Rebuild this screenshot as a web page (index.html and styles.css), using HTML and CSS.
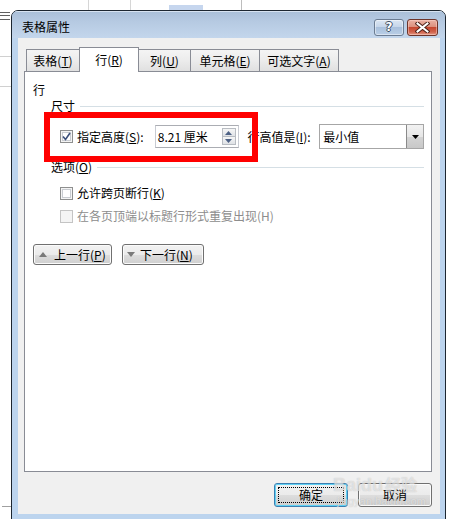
FILE: index.html
```html
<!DOCTYPE html>
<html lang="zh-CN">
<head>
<meta charset="utf-8">
<title>表格属性</title>
<link rel="stylesheet" href="styles.css">
</head>
<body>
<div class="doc-line doc-menu1"></div>
<div class="doc-line doc-menu2"></div>
<div class="doc-line doc-menu3"></div>
<div class="doc-rule doc-r1"></div>
<div class="doc-rule doc-r2"></div>
<div class="doc-rule doc-r3"></div>
<div class="doc-vline doc-v1"></div>
<div class="doc-vline doc-v2"></div>
<div class="doc-vline doc-v3"></div>
<div class="doc-sel"></div>

<div class="window">
  <div class="titlebar">
    <span class="title">表格属性</span>
    <div class="caption-btns">
      <span class="cap help">?</span>
      <span class="cap close">
        <svg width="15" height="11" viewBox="0 0 15 11">
          <path d="M2.5 1.5 L12.5 9.5 M12.5 1.5 L2.5 9.5" stroke="#4a2018" stroke-width="4" stroke-linecap="square"/>
          <path d="M2.5 1.5 L12.5 9.5 M12.5 1.5 L2.5 9.5" stroke="#ffffff" stroke-width="2" stroke-linecap="square"/>
        </svg>
      </span>
    </div>
  </div>
  <div class="client">
    <div class="tabs">
      <div class="tab t1">表格(<u>T</u>)</div>
      <div class="tab t2 active">行(<u>R</u>)</div>
      <div class="tab t3">列(<u>U</u>)</div>
      <div class="tab t4">单元格(<u>E</u>)</div>
      <div class="tab t5">可选文字(<u>A</u>)</div>
    </div>
    <div class="panel">
      <div class="sec-title">行</div>
      <div class="group-head"><span>尺寸</span><span class="rule"></span></div>
      <div class="height-row">
        <span class="cb checked">
          <svg width="9" height="9" viewBox="0 0 9 9"><path d="M1 4.5 L3.5 7.5 L8 1" stroke="#3b4f7a" stroke-width="1.6" fill="none"/></svg>
        </span>
        <span class="lbl lbl-h">指定高度(<u>S</u>):</span>
        <span class="spin">
          <span class="spin-val">8.21 厘米</span>
          <span class="spin-btns">
            <span class="sb up"><svg width="7" height="4" viewBox="0 0 7 4"><path d="M0 4 L3.5 0 L7 4 Z" fill="#4d6185"/></svg></span>
            <span class="sb down"><svg width="7" height="4" viewBox="0 0 7 4"><path d="M0 0 L3.5 4 L7 0 Z" fill="#4d6185"/></svg></span>
          </span>
        </span>
        <span class="lbl lbl-r">行高值是(<u>I</u>):</span>
        <span class="select">
          <span class="sel-val">最小值</span>
          <span class="sel-btn"><svg width="7" height="4" viewBox="0 0 7 4"><path d="M0 0 L3.5 4 L7 0 Z" fill="#000"/></svg></span>
        </span>
      </div>
      <div class="group-head opt"><span>选项(<u>O</u>)</span><span class="rule"></span></div>
      <div class="cb-row r1"><span class="cb"></span><span class="lbl">允许跨页断行(<u>K</u>)</span></div>
      <div class="cb-row r2 disabled"><span class="cb"></span><span class="lbl">在各页顶端以标题行形式重复出现(H)</span></div>
      <div class="nav-row">
        <span class="btn nav prev"><svg width="8" height="5" viewBox="0 0 8 5"><path d="M0 5 L4 0 L8 5 Z" fill="#7a7a7a"/></svg><span>上一行(<u>P</u>)</span></span>
        <span class="btn nav next"><svg width="8" height="5" viewBox="0 0 8 5"><path d="M0 0 L4 5 L8 0 Z" fill="#7a7a7a"/></svg><span>下一行(<u>N</u>)</span></span>
      </div>
    </div>
    <div class="footer">
      <span class="btn ok"><span class="focus">确定</span></span>
      <span class="btn cancel">取消</span>
    </div>
  </div>
</div>

<div class="annot"></div>
<div class="watermark">
  <div class="wm-big">Baidu<span class="wm-cn">经验</span></div>
  <div class="wm-small">jingyan.baidu.com</div>
</div>
</body>
</html>
```
FILE: styles.css
```css
html, body {
  margin: 0;
  padding: 0;
}
body {
  width: 449px;
  height: 519px;
  overflow: hidden;
  position: relative;
  background: #ffffff;
  font-family: "Noto Sans CJK SC", "Microsoft YaHei", sans-serif;
  font-size: 12px;
  color: #000;
}
u { text-decoration: underline; text-underline-offset: 1px; }

/* background document fragments */
.doc-line { position: absolute; left: 0; width: 10px; height: 1px; background: #606060; }
.doc-menu1 { top: 12px; }
.doc-menu2 { top: 15px; }
.doc-menu3 { top: 19px; }
.doc-rule { position: absolute; left: 0; width: 11px; height: 1px; background: #d0d0d0; }
.doc-r1 { top: 56px; }
.doc-r2 { top: 86px; }
.doc-r3 { top: 506px; left: 2px; width: 9px; background: #a0a0a0; }
.doc-vline { position: absolute; top: 0; width: 1px; height: 10px; background: #d6d6d6; }
.doc-v1 { left: 88px; }
.doc-v2 { left: 130px; }
.doc-v3 { left: 241px; background: #bdbdbd; }
.doc-sel { position: absolute; left: 169px; top: 5px; width: 34px; height: 5px; background: #c6d6ee; }

/* window */
.window {
  position: absolute;
  left: 11px;
  top: 10px;
  width: 435px;
  height: 515px;
  box-sizing: border-box;
  border: 1px solid #1c2630;
  border-radius: 7px 7px 0 0;
  background: #bcd4ee;
  display: flex;
  flex-direction: column;
  overflow: hidden;
}
.titlebar {
  height: 27px;
  flex: none;
  display: flex;
  align-items: flex-start;
  justify-content: space-between;
  padding: 0 7px 0 10px;
  background: linear-gradient(to bottom, #a9bfd8 0%, #b6cae2 40%, #c3d6ec 100%);
  box-shadow: inset 0 1px 0 #d7e3f1;
}
.title {
  margin-top: 8px;
  line-height: 16px;
  font-size: 12px;
  color: #000;
}
.caption-btns {
  display: flex;
  gap: 3px;
  margin-top: 8px;
}
.cap {
  height: 17px;
  box-sizing: border-box;
  border-radius: 3px;
  display: flex;
  align-items: center;
  justify-content: center;
}
.help {
  width: 30px;
  border: 1px solid #6b7c92;
  background: linear-gradient(to bottom, #dbe6f3 0%, #c6d6ea 45%, #a9c0dc 50%, #b9cee6 100%);
  box-shadow: inset 0 0 0 1px rgba(255,255,255,0.45);
  color: #fff;
  font-family: "DejaVu Sans", sans-serif;
  font-weight: bold;
  font-size: 12px;
  line-height: 15px;
  text-shadow: 1px 0 0 #3f4d60, -1px 0 0 #3f4d60, 0 1px 0 #3f4d60, 0 -1px 0 #3f4d60;
}
.close {
  width: 31px;
  border: 1px solid #6d342a;
  background: linear-gradient(to bottom, #eab2a4 0%, #dc907e 45%, #c6472f 50%, #d0634d 80%, #e59c89 100%);
  box-shadow: inset 0 0 0 1px rgba(255,220,210,0.45);
}

.client {
  height: 476px;
  flex: none;
  margin: 0 5px 0 6px;
  background: #f0f0f0;
  box-sizing: border-box;
  padding: 9px 8px 0 6px;
  display: flex;
  flex-direction: column;
}

/* tabs */
.tabs {
  display: flex;
  align-items: flex-end;
  height: 24px;
  padding-left: 2px;
}
.tab {
  height: 22px;
  box-sizing: border-box;
  border: 1px solid #898c95;
  border-bottom: none;
  background: linear-gradient(to bottom, #f4f4f4 0%, #ececec 50%, #e0e0e0 100%);
  display: flex;
  align-items: center;
  justify-content: center;
  line-height: 16px;
  padding-top: 1px;
}
.tab + .tab { margin-left: -1px; }
.t1 { width: 54px; }
.t2 { width: 60px; }
.t3 { width: 53px; }
.t4 { width: 70px; }
.t5 { width: 80px; }
.tab.active {
  height: 25px;
  background: #ffffff;
  margin-bottom: -1px;
  position: relative;
  z-index: 1;
  padding-top: 0;
}

/* panel */
.panel {
  height: 401px;
  box-sizing: border-box;
  border: 1px solid #898c95;
  background: #ffffff;
  padding: 0 7px 0 8px;
  display: flex;
  flex-direction: column;
}
.sec-title {
  margin-top: 10px;
  height: 16px;
  line-height: 16px;
}
.group-head {
  height: 16px;
  line-height: 16px;
  padding-left: 18px;
  display: flex;
  align-items: center;
}
.group-head .rule {
  flex: 1;
  height: 0;
  border-top: 1px solid #d5dfe5;
  margin-left: 5px;
}
.group-head.opt { margin-top: 10px; }

.height-row {
  margin-top: 10px;
  height: 25px;
  display: flex;
  align-items: center;
  padding-left: 27px;
}
.cb {
  width: 13px;
  height: 13px;
  box-sizing: border-box;
  border: 1px solid #8e8f8f;
  background: #fff;
  box-shadow: inset 0 0 0 1px #f4f4f4, inset 0 0 0 2px #c9ccd1;
  display: flex;
  align-items: center;
  justify-content: center;
  flex: none;
}
.lbl {
  line-height: 16px;
  white-space: nowrap;
}
.height-row .lbl-h { margin-left: 4px; width: 78px; }
.spin {
  width: 84px;
  height: 23px;
  box-sizing: border-box;
  border: 1px solid #abadb3;
  border-left-color: #c8cbd2;
  border-right-color: #c8cbd2;
  background: #fff;
  display: flex;
  align-items: center;
  justify-content: space-between;
  padding: 0 2px 0 2px;
}
.spin-val { line-height: 16px; }
.spin-btns {
  display: flex;
  flex-direction: column;
  width: 14px;
}
.sb {
  height: 9px;
  box-sizing: border-box;
  border: 1px solid #b8bcc2;
  background: linear-gradient(to bottom, #f6f6f6, #dfe2e6);
  display: flex;
  align-items: center;
  justify-content: center;
}
.sb.down { margin-top: -1px; height: 9px; }
.height-row .lbl-r { margin-left: 9px; width: 72px; }
.select {
  width: 105px;
  height: 25px;
  box-sizing: border-box;
  border: 1px solid #a6a6a6;
  background: #fff;
  display: flex;
  align-items: stretch;
  justify-content: space-between;
}
.sel-val { line-height: 23px; padding-left: 3px; }
.sel-btn {
  width: 16px;
  border-left: 1px solid #8a8a8a;
  background: linear-gradient(to bottom, #f2f2f2 0%, #e6e6e6 50%, #d4d4d4 51%, #c8c8c8 100%);
  display: flex;
  align-items: center;
  justify-content: center;
}

.cb-row {
  height: 16px;
  display: flex;
  align-items: center;
  padding-left: 27px;
}
.cb-row .lbl { margin-left: 4px; }
.cb-row.r1 { margin-top: 10px; }
.cb-row.r2 { margin-top: 7px; }
.cb-row.disabled .lbl { color: #8d8d8d; }
.cb-row.disabled .cb {
  border-color: #c4c4c4;
  box-shadow: none;
  background: #f4f4f4;
}

.nav-row {
  margin-top: 20px;
  display: flex;
  gap: 10px;
}
.btn {
  box-sizing: border-box;
  border: 1px solid #707070;
  border-radius: 3px;
  background: linear-gradient(to bottom, #f2f2f2 0%, #ebebeb 50%, #dddddd 51%, #cfcfcf 100%);
  box-shadow: inset 0 0 0 1px #fbfbfb;
  display: flex;
  align-items: center;
  justify-content: center;
  line-height: 16px;
}
.nav {
  height: 21px;
  justify-content: flex-start;
  gap: 7px;
  padding-left: 5px;
}
.nav.prev { width: 79px; }
.nav.next { width: 82px; gap: 5px; padding-left: 4px; }

.footer {
  margin-top: 11px;
  display: flex;
  justify-content: flex-end;
  gap: 10px;
}
.footer .btn {
  width: 74px;
  height: 24px;
}
.btn.ok {
  border-color: #3c7fb1;
  box-shadow: inset 0 0 0 1px #5fd2f4;
}
.focus {
  width: 66px;
  height: 16px;
  box-sizing: border-box;
  border: 1px dotted #000;
  display: flex;
  align-items: center;
  justify-content: center;
  line-height: 14px;
}

/* annotation overlay */
.annot {
  position: absolute;
  left: 44px;
  top: 112px;
  width: 214px;
  height: 50px;
  box-sizing: border-box;
  border: 6px solid #ff0000;
}

/* watermark */
.watermark {
  position: absolute;
  left: 333px;
  top: 474px;
  color: rgba(255,255,255,0.55);
  text-shadow: 0 0 1px rgba(120,120,120,0.45);
  pointer-events: none;
}
.wm-big {
  font-family: "Liberation Sans", sans-serif;
  font-weight: bold;
  font-size: 18px;
  line-height: 20px;
}
.wm-cn { font-family: "Noto Sans CJK SC", sans-serif; font-size: 16px; margin-left: 2px; }
.wm-small {
  font-family: "Liberation Sans", sans-serif;
  font-size: 11px;
  line-height: 12px;
  padding-left: 4px;
}
```
